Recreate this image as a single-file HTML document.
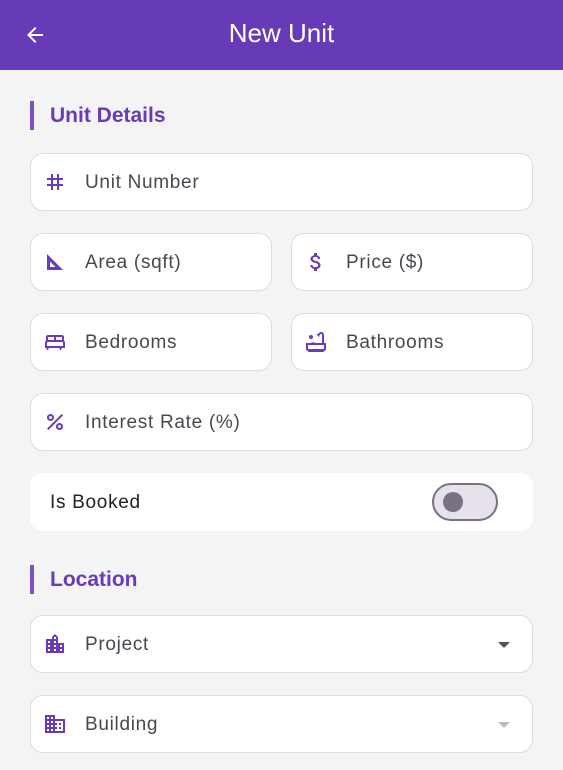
<!DOCTYPE html>
<html><head><style>
body{margin:0;width:563px;height:770px;background:#f4f4f4;font-family:"Liberation Sans",sans-serif;overflow:hidden;position:relative}
.hdr{position:absolute;left:0;top:0;width:563px;height:70px;background:#673ab7}
.hdr .t{position:absolute;left:0;right:0;top:18px;text-align:center;color:#fff;font-size:26px}
.sec{position:absolute;left:30px;height:29px;border-left:4px solid #7a4fc8;padding-left:16px;color:#6a3bb8;font-size:21px;font-weight:bold;line-height:29px}
.f{position:absolute;height:56px;background:#fff;border:1px solid #ddd;border-radius:13px;box-sizing:content-box}
.f svg{position:absolute;left:12px;top:16px}
.f span{position:absolute;left:54px;top:18px;font-size:19px;color:#4a4750;letter-spacing:.7px}
.tri{position:absolute;right:22px;top:26px;width:0;height:0;border-left:6px solid transparent;border-right:6px solid transparent;border-top:6px solid #555}
</style></head><body>
<div class="hdr"><svg style="position:absolute;left:23px;top:23px" width="24" height="24" viewBox="0 0 24 24"><path d="M20 11H7.8l5.6-5.6L12 4l-8 8 8 8 1.4-1.4L7.8 13H20z" fill="#fff"/></svg><div class="t">New Unit</div></div>
<div class="sec" style="top:101px">Unit Details</div>
<div class="f" style="left:30px;top:153px;width:501px"><svg width="24" height="24" viewBox="0 0 24 24"><path d="M20 10V8h-4V4h-2v4h-4V4H8v4H4v2h4v4H4v2h4v4h2v-4h4v4h2v-4h4v-2h-4v-4h4zm-6 4h-4v-4h4v4z" fill="#6a3bb8"/></svg><span>Unit Number</span></div>
<div class="f" style="left:30px;top:233px;width:240px"><svg width="24" height="24" viewBox="0 0 24 24"><path d="M4 4v16h16L4 4zm3 7.5l5.5 5.5H7v-5.5z" fill="#6a3bb8"/></svg><span>Area (sqft)</span></div>
<div class="f" style="left:291px;top:233px;width:240px"><svg width="24" height="24" viewBox="0 0 24 24"><path d="M11.8 10.9c-2.3-.6-3-1.2-3-2.1 0-1.1 1-1.9 2.7-1.9 1.8 0 2.4.8 2.5 2.1h2.2c-.1-1.700-1.1-3.3-3.2-3.8V3h-3v2.2c-1.9.4-3.5 1.7-3.5 3.6 0 2.3 1.9 3.4 4.7 4.1 2.5.6 3 1.5 3 2.4 0 .7-.5 1.8-2.7 1.8-2.1 0-2.9-.9-3-2.1H6.3c.1 2.2 1.8 3.5 3.7 3.9V21h3v-2.1c1.9-.4 3.5-1.5 3.5-3.5 0-2.8-2.4-3.8-4.7-4.5z" fill="#6a3bb8"/></svg><span>Price ($)</span></div>
<div class="f" style="left:30px;top:313px;width:240px"><svg width="24" height="24" viewBox="0 0 24 24"><path d="M21 10.8V7c0-1.1-.9-2-2-2H5c-1.1 0-2 .9-2 2v3.8c-.6.5-1 1.3-1 2.2v5h1.3l.7 2h1l.7-2h10.6l.7 2h1l.7-2H22v-5c0-.9-.4-1.700-1-2.2zM13 7h6v3h-6V7zM5 7h6v3H5V7zm15 9H4v-3c0-.6.4-1 1-1h14c.6 0 1 .4 1 1v3z" fill="#6a3bb8"/></svg><span>Bedrooms</span></div>
<div class="f" style="left:291px;top:313px;width:240px"><svg width="24" height="24" viewBox="0 0 24 24"><circle cx="7" cy="7" r="2" fill="#6a3bb8"/><path d="M20 13V4.8C20 3.3 18.7 2 17.2 2c-.7 0-1.4.3-2 .8l-1.2 1.3c-.2-.1-.4-.1-.6-.1-.4 0-.8.1-1.1.3l2.8 2.8c.2-.3.3-.7.3-1.100 0-.2 0-.4-.1-.6l1.3-1.3c.1-.1.3-.2.6-.2.5 0 .8.4.8.8V13h-6.8c-.3-.2-.6-.4-.9-.5-.4-.2-.8-.3-1.3-.3-1 0-1.8.5-2 .8H2v6c0 1.1.9 2 2 2 0 .6.4 1 1 1h14c.6 0 1-.4 1-1 1.1 0 2-.9 2-2v-6h-2zm0 6H4v-4h16v4z" fill="#6a3bb8"/></svg><span>Bathrooms</span></div>
<div class="f" style="left:30px;top:393px;width:501px"><svg width="24" height="24" viewBox="0 0 24 24"><path d="M7.5 4C5.6 4 4 5.6 4 7.5S5.6 11 7.5 11 11 9.4 11 7.5 9.4 4 7.5 4zm0 5C6.7 9 6 8.3 6 7.5S6.7 6 7.5 6 9 6.7 9 7.5 8.3 9 7.5 9zm9 4c-1.900 0-3.5 1.6-3.5 3.5s1.6 3.5 3.5 3.5 3.5-1.6 3.5-3.5-1.6-3.5-3.5-3.5zm0 5c-.8 0-1.5-.7-1.5-1.5s.7-1.5 1.5-1.5 1.5.7 1.5 1.5-.7 1.5-1.5 1.5zM5.4 20 4 18.6 18.6 4 20 5.4 5.4 20z" fill="#6a3bb8"/></svg><span>Interest Rate (%)</span></div>
<div class="f" style="left:30px;top:473px;width:503px;height:58px;border:none"><span style="left:20px;top:19px;color:#222">Is Booked</span>
<div style="position:absolute;left:402px;top:10px;width:66px;height:38px;border:2px solid #777380;border-radius:20px;background:#e6e1ea;box-sizing:border-box"></div>
<div style="position:absolute;left:413px;top:19px;width:20px;height:20px;border-radius:50%;background:#777380"></div></div>
<div class="sec" style="top:565px">Location</div>
<div class="f" style="left:30px;top:615px;width:501px"><svg width="24" height="24" viewBox="0 0 24 24"><path d="M15 11V5l-3-3-3 3v2H3v14h18V11h-6zm-8 8H5v-2h2v2zm0-4H5v-2h2v2zm0-4H5V9h2v2zm6 8h-2v-2h2v2zm0-4h-2v-2h2v2zm0-4h-2V9h2v2zm0-4h-2V5h2v2zm6 12h-2v-2h2v2zm0-4h-2v-2h2v2z" fill="#6a3bb8"/></svg><span>Project</span><div class="tri"></div></div>
<div class="f" style="left:30px;top:695px;width:501px"><svg width="24" height="24" viewBox="0 0 24 24"><path d="M12 7V3H2v18h20V7H12zM6 19H4v-2h2v2zm0-4H4v-2h2v2zm0-4H4V9h2v2zm0-4H4V5h2v2zm4 12H8v-2h2v2zm0-4H8v-2h2v2zm0-4H8V9h2v2zm0-4H8V5h2v2zm10 12h-8v-2h2v-2h-2v-2h2v-2h-2V9h8v10zm-2-8h-2v2h2v-2zm0 4h-2v2h2v-2z" fill="#6a3bb8"/></svg><span>Building</span><div class="tri" style="border-top-color:#bbb"></div></div>
</body></html>
